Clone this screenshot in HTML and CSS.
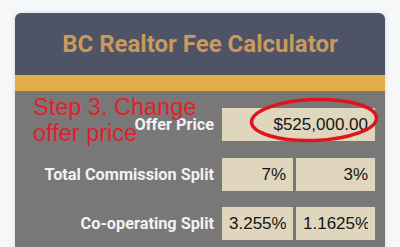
FILE: index.html
```html
<!DOCTYPE html>
<html>
<head>
<meta charset="utf-8">
<link rel="stylesheet" href="styles.css">
</head>
<body>
<div class="card">
  <div class="header"><h1 class="title">BC Realtor Fee Calculator</h1></div>
  <div class="band"></div>
  <div class="body">
    <div class="note">Step 3. Change<br>offer price</div>
    <svg class="circle" width="134" height="50" viewBox="0 0 134 50"><ellipse cx="66" cy="24" rx="62.5" ry="20.5" fill="none" stroke="#e0141e" stroke-width="3.5" transform="rotate(-2 66 24)"/></svg>
    <div class="row">
      <div class="label">Offer Price</div>
      <div class="fields"><div class="box wide"><div class="val">$525,000.00</div></div></div>
    </div>
    <div class="row">
      <div class="label">Total Commission Split</div>
      <div class="fields"><div class="box b1"><div class="val">7%</div></div><div class="box b2"><div class="val">3%</div></div></div>
    </div>
    <div class="row">
      <div class="label">Co-operating Split</div>
      <div class="fields"><div class="box b1"><div class="val">3.255%</div></div><div class="box b2"><div class="val">1.1625%</div></div></div>
    </div>
  </div>
</div>
</body>
</html>
```
FILE: styles.css
```css
html, body { margin: 0; padding: 0; }
body { background: #f6f7f9; width: 400px; height: 247px; overflow: hidden; font-family: Roboto, "Liberation Sans", sans-serif; }
.card { margin: 13px 0 0 15px; width: 370px; border-radius: 6px 6px 0 0; overflow: hidden; box-shadow: 0 0 4px rgba(0,0,0,0.12); }
.header { background: #4e5365; height: 62px; display: flex; align-items: center; justify-content: center; }
.title { margin: 0; color: #c99a5c; font-size: 24px; font-weight: 700; }
.band { background: #e3ac4a; height: 16px; }
.body { background: #787878; padding: 17px 10px 7px 0; position: relative; display: flex; flex-direction: column; gap: 16.5px; }
.row { display: flex; align-items: center; height: 33px; }
.label { flex: 1; text-align: right; color: #f2f2f2; font-weight: 700; font-size: 16.3px; padding-right: 8px; white-space: nowrap; }
.fields { display: flex; gap: 3px; width: 153px; }
.box { background: #e0d6be; height: 33px; box-sizing: border-box; padding: 0 7px; font-family: "Liberation Sans", Arial, sans-serif; font-size: 17px; color: #151515; }
.val { line-height: 33px; text-align: right; white-space: nowrap; overflow: hidden; }
.wide { width: 153px; }
.b1 { width: 71px; }
.b2 { width: 79px; }
.note { position: absolute; left: 18px; top: 3px; color: #e0202a; font-family: "Liberation Sans", Arial, sans-serif; font-size: 23.5px; line-height: 26px; }
.circle { position: absolute; left: 233px; top: 5px; }
```
